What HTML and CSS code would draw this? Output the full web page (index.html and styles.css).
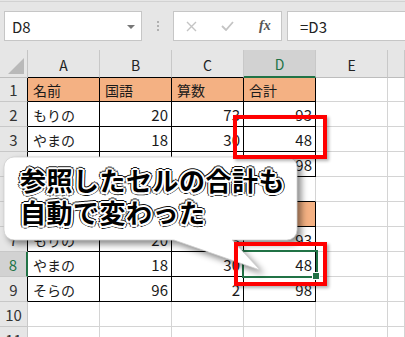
FILE: index.html
```html
<!DOCTYPE html>
<html>
<head>
    <meta charset="utf-8">
    <title>Excel 参照セル</title>
    <link rel="stylesheet" href="styles.css">
</head>
<body>
    <div class="excel">
        <!-- 数式バー -->
        <div class="formula-bar">
            <div class="name-box">D8<span class="dropdown"></span></div>
            <div class="grip"><i></i><i></i><i></i></div>
            <div class="fx-buttons">
                <svg width="11" height="11" viewBox="0 0 11 11"><path d="M1 1L10 10M10 1L1 10" stroke="#c4c4c4" stroke-width="1.4"/></svg>
                <svg width="13" height="10" viewBox="0 0 13 10"><path d="M1 5L5 9L12 1" stroke="#c4c4c4" stroke-width="1.8" fill="none"/></svg>
                <span class="fx">fx</span>
            </div>
            <div class="formula-input">=D3</div>
        </div>

        <!-- シート -->
        <div class="sheet">
            <div class="corner"><span class="corner-tri"></span></div>
            <div class="col-h top">A</div>
            <div class="col-h top">B</div>
            <div class="col-h top">C</div>
            <div class="col-h top active">D</div>
            <div class="col-h">E</div>
            <div class="col-h"></div>

            <div class="row-h bd">1</div>
            <div class="c t hd">名前</div>
            <div class="c t hd">国語</div>
            <div class="c t hd">算数</div>
            <div class="c t hd">合計</div>
            <div class="c"></div><div class="c"></div>

            <div class="row-h bd">2</div>
            <div class="c t">もりの</div>
            <div class="c t n">20</div>
            <div class="c t n">73</div>
            <div class="c t n">93</div>
            <div class="c"></div><div class="c"></div>

            <div class="row-h bd">3</div>
            <div class="c t">やまの</div>
            <div class="c t n">18</div>
            <div class="c t n">30</div>
            <div class="c t n">48</div>
            <div class="c"></div><div class="c"></div>

            <div class="row-h bd">4</div>
            <div class="c t">そらの</div>
            <div class="c t n">96</div>
            <div class="c t n">2</div>
            <div class="c t n">98</div>
            <div class="c"></div><div class="c"></div>

            <div class="row-h">5</div>
            <div class="c under"></div>
            <div class="c under"></div>
            <div class="c under"></div>
            <div class="c under"></div>
            <div class="c"></div><div class="c"></div>

            <div class="row-h bd">6</div>
            <div class="c t hd">名前</div>
            <div class="c t hd">国語</div>
            <div class="c t hd">算数</div>
            <div class="c t hd">合計</div>
            <div class="c"></div><div class="c"></div>

            <div class="row-h bd">7</div>
            <div class="c t">もりの</div>
            <div class="c t n">20</div>
            <div class="c t n">73</div>
            <div class="c t n">93</div>
            <div class="c"></div><div class="c"></div>

            <div class="row-h bd active">8</div>
            <div class="c t">やまの</div>
            <div class="c t n">18</div>
            <div class="c t n">30</div>
            <div class="c t n">48</div>
            <div class="c"></div><div class="c"></div>

            <div class="row-h bd">9</div>
            <div class="c t">そらの</div>
            <div class="c t n">96</div>
            <div class="c t n">2</div>
            <div class="c t n">98</div>
            <div class="c"></div><div class="c"></div>

            <div class="row-h">10</div>
            <div class="c"></div><div class="c"></div><div class="c"></div>
            <div class="c"></div><div class="c"></div><div class="c"></div>

            <div class="row-h">11</div>
            <div class="c"></div><div class="c"></div><div class="c"></div>
            <div class="c"></div><div class="c"></div><div class="c"></div>
        </div>

        <!-- 選択セル D8 -->
        <div class="selection"><span class="fill-handle"></span></div>

        <!-- 吹き出し -->
        <div class="callout">
            <svg class="callout-shape" width="300" height="120" viewBox="0 0 300 120">
                <path d="M10 0H283A10 10 0 0 1 293 10V73A10 10 0 0 1 283 83H228L256 113L170 83H10A10 10 0 0 1 0 73V10A10 10 0 0 1 10 0Z" fill="#fff" stroke="#cfcfcf" stroke-width="0.8"/>
            </svg>
            <div class="callout-text">参照したセルの合計も<br>自動で変わった</div>
        </div>

        <!-- 赤枠 -->
        <div class="mark mark-top"></div>
        <div class="mark mark-bottom"></div>
    </div>
</body>
</html>
```

FILE: styles.css
```css
/* Excel風の画面 */
body {
    margin: 0;
    padding: 0;
    background: #e6e6e6;
    font-family: "Noto Sans CJK JP", "Noto Sans", sans-serif;
    color: #1a1a1a;
}
.excel {
    width: 405px;
    height: 337px;
    position: relative;
    overflow: hidden;
    background: #e6e6e6;
}

/* 数式バー */
.formula-bar {
    margin-top: 1px;
    height: 49px;
    box-sizing: border-box;
    border-top: 1px solid #d2d2d2;
    padding: 9px 0 0 4px;
    display: flex;
    align-items: flex-start;
}
.name-box {
    width: 138px;
    height: 30px;
    box-sizing: border-box;
    background: #fff;
    border: 1px solid #c6c6c6;
    display: flex;
    align-items: center;
    padding-left: 7px;
    font-size: 15px;
    color: #222;
    position: relative;
}
.dropdown {
    position: absolute;
    right: 6px;
    top: 13px;
    border-left: 4px solid transparent;
    border-right: 4px solid transparent;
    border-top: 4px solid #777;
}
.grip {
    margin: 10px 14px 0 15px;
    width: 2px;
    display: flex;
    flex-direction: column;
    gap: 2px;
}
.grip i {
    width: 2px;
    height: 2px;
    background: #b0b0b0;
}
.fx-buttons {
    width: 109px;
    height: 30px;
    box-sizing: border-box;
    background: #fff;
    border: 1px solid #c6c6c6;
    display: flex;
    align-items: center;
    padding-left: 12px;
    gap: 24px;
}
.fx {
    font-family: "Liberation Serif", serif;
    font-style: italic;
    font-weight: bold;
    font-size: 14px;
    color: #555;
    margin-left: 1px;
}
.formula-input {
    flex: 1;
    margin: 0 -2px 0 5px;
    height: 30px;
    box-sizing: border-box;
    background: #fff;
    border: 1px solid #c6c6c6;
    display: flex;
    align-items: center;
    padding-left: 12px;
    font-size: 15px;
    color: #222;
}

/* シート */
.sheet {
    display: grid;
    grid-template-columns: 28px repeat(5, 72px) 1fr;
    grid-template-rows: 28px 24px repeat(10, 25px);
    background: #fff;
}
.sheet > div {
    box-sizing: border-box;
    border-right: 1px solid #d4d4d4;
    border-bottom: 1px solid #d4d4d4;
}
.corner {
    background: #e6e6e6;
    position: relative;
    border-right-color: #c4c4c4 !important;
    border-bottom-color: #bdbdbd !important;
}
.corner-tri {
    position: absolute;
    right: 3px;
    bottom: 3px;
    width: 0;
    height: 0;
    border-left: 16px solid transparent;
    border-bottom: 16px solid #b9b9b9;
}
.col-h {
    background: #e6e6e6;
    border-right-color: #c8c8c8 !important;
    border-bottom-color: #bdbdbd !important;
    display: flex;
    align-items: center;
    justify-content: center;
    font-size: 14px;
    color: #222;
    padding-top: 2px;
}
.col-h.top {
    border-bottom-color: #000 !important;
}
.col-h.active {
    background: #d2d2d2;
    color: #217346;
    border-bottom: 2px solid #217346 !important;
}
.row-h {
    background: #e6e6e6;
    border-right-color: #c8c8c8 !important;
    border-bottom-color: #c8c8c8 !important;
    display: flex;
    align-items: center;
    justify-content: center;
    font-size: 15px;
    color: #333;
}
.row-h.bd {
    border-right-color: #000 !important;
}
.row-h.active {
    background: #d2d2d2;
    color: #217346;
    border-right: 2px solid #217346 !important;
}
.c {
    display: flex;
    align-items: center;
    padding: 1px 4px 0 5px;
    font-size: 14px;
    white-space: nowrap;
}
.c.t {
    border-right-color: #000;
    border-bottom-color: #000;
}
.c.under {
    border-bottom-color: #000;
}
.c.hd {
    background: #f4b183;
}
.c.n {
    justify-content: flex-end;
    font-size: 15px;
    padding-right: 3px;
}

/* 選択セル */
.selection {
    position: absolute;
    left: 242px;
    top: 250px;
    width: 76px;
    height: 28px;
    box-sizing: border-box;
    border: 2px solid #217346;
}
.fill-handle {
    position: absolute;
    right: -4px;
    bottom: -4px;
    width: 6px;
    height: 6px;
    background: #217346;
    border: 1px solid #fff;
}

/* 吹き出し */
.callout {
    position: absolute;
    left: 4px;
    top: 157px;
    width: 293px;
    height: 83px;
}
.callout-shape {
    position: absolute;
    left: 0;
    top: 0;
    overflow: visible;
    filter: drop-shadow(4px 4px 3px rgba(0, 0, 0, 0.45));
}
.callout-text {
    position: relative;
    padding: 7px 0 0 16px;
    font-size: 26px;
    line-height: 32px;
    font-weight: bold;
    letter-spacing: 0.5px;
    color: #000;
    white-space: nowrap;
    text-shadow:
        2px 0 #fff, -2px 0 #fff, 0 2px #fff, 0 -2px #fff,
        1.5px 1.5px #fff, -1.5px 1.5px #fff, 1.5px -1.5px #fff, -1.5px -1.5px #fff,
        3px 0 #111, -3px 0 #111, 0 3px #111, 0 -3px #111,
        2.2px 2.2px #111, -2.2px 2.2px #111, 2.2px -2.2px #111, -2.2px -2.2px #111;
}

/* 赤枠 */
.mark {
    position: absolute;
    box-sizing: border-box;
    border: 4px solid #ff0000;
    box-shadow: 2px 2px 3px rgba(0, 0, 0, 0.3);
}
.mark-top {
    left: 233px;
    top: 115px;
    width: 94px;
    height: 44px;
}
.mark-bottom {
    left: 234px;
    top: 242px;
    width: 93px;
    height: 44px;
}
```
